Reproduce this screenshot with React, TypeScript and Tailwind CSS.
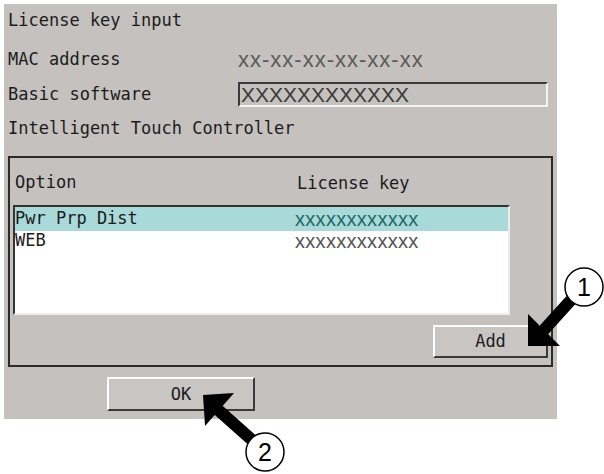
const mono = { fontFamily: '"DejaVu Sans Mono", "Liberation Mono", monospace' };

function Label({ children }: { children: React.ReactNode }) {
  return <span className="text-[17px] leading-none text-[#1c1c1c]">{children}</span>;
}

export default function App() {
  const options = [
    { name: 'Pwr Prp Dist', key: 'xxxxxxxxxxxx', selected: true },
    { name: 'WEB', key: 'xxxxxxxxxxxx', selected: false },
  ];

  return (
    <div className="relative w-[604px] h-[474px] bg-white overflow-hidden" style={mono}>
      {/* Dialog */}
      <div className="ml-[4px] mt-[4px] w-[553px] h-[415px] bg-[#c4c1be] flex flex-col pl-[4px]">
        <div className="h-[32px] flex items-center">
          <Label>License key input</Label>
        </div>
        <div className="mt-[6px] h-[36px] flex items-center">
          <div className="w-[230px]">
            <Label>MAC address</Label>
          </div>
          <span
            className="text-[22px] leading-none text-[#5a5a5a] tracking-[1px]"
            style={{ fontFamily: '"Liberation Sans", Arial, sans-serif' }}
          >
            xx-xx-xx-xx-xx-xx
          </span>
        </div>
        <div className="mt-[4px] h-[25px] flex items-center">
          <div className="w-[230px]">
            <Label>Basic software</Label>
          </div>
          <div className="w-[310px] h-[25px] border-t-2 border-l-2 border-b-2 border-r-2 border-t-[#3a3a3a] border-l-[#3a3a3a] border-b-[#f4f4f4] border-r-[#f4f4f4] flex items-center pl-[1px]">
            <span
              className="text-[21px] leading-none text-[#3a3a3a]"
              style={{ fontFamily: '"Liberation Sans", Arial, sans-serif' }}
            >
              XXXXXXXXXXXX
            </span>
          </div>
        </div>
        <div className="mt-[9px] h-[24px] flex items-center">
          <Label>Intelligent Touch Controller</Label>
        </div>

        {/* Option group */}
        <div className="mt-[16px] w-[545px] border-2 border-[#2b2b2b] flex flex-col pt-[13px] pb-[7px]">
          <div className="h-[24px] flex items-center pl-[5px]">
            <div className="w-[282px]">
              <Label>Option</Label>
            </div>
            <Label>License key</Label>
          </div>
          <div className="mt-[10px] ml-[3px] w-[497px] h-[110px] bg-white border-2 border-t-[#333] border-l-[#333] border-b-[#ececec] border-r-[#ececec] flex flex-col">
            {options.map((o, i) => (
              <div
                key={o.name}
                className={`flex items-center ${i === 0 ? 'h-[24px]' : 'h-[20px]'} ${o.selected ? 'bg-[#a9d9d9]' : ''}`}
              >
                <div className="w-[280px]">
                  <span className="text-[17px] leading-none text-[#1c1c1c]">{o.name}</span>
                </div>
                <span
                  className={`text-[20px] leading-none tracking-[0.3px] ${o.selected ? 'text-[#1d6a66]' : 'text-[#555]'}`}
                  style={{ fontFamily: '"Liberation Sans", Arial, sans-serif' }}
                >
                  {o.key}
                </span>
              </div>
            ))}
          </div>
          <div className="mt-[10px] flex justify-end pr-[3px]">
            <button className="w-[115px] h-[33px] bg-[#c8c5c2] border-2 border-t-white border-l-white border-b-[#3a3a3a] border-r-[#3a3a3a] flex items-center justify-center">
              <span className="text-[17px] leading-none text-[#1c1c1c]">Add</span>
            </button>
          </div>
        </div>

        <div className="mt-[10px] ml-[99px]">
          <button className="w-[148px] h-[34px] bg-[#c8c5c2] border-2 border-t-white border-l-white border-b-[#3a3a3a] border-r-[#3a3a3a] flex items-center justify-center">
            <span className="text-[17px] leading-none text-[#1c1c1c]">OK</span>
          </button>
        </div>
      </div>

      {/* Callout arrows */}
      <svg className="absolute inset-0 pointer-events-none" width="604" height="474" viewBox="0 0 604 474">
        <line x1="542" y1="332" x2="571" y2="300" stroke="black" strokeWidth="12" />
        <polygon points="528,346 528,314 560,346" fill="black" />
        <circle cx="584" cy="287" r="19" fill="white" stroke="black" strokeWidth="1.5" />
        <text x="584" y="296" textAnchor="middle" fontSize="25" fontFamily="Liberation Sans, Arial, sans-serif" fill="black">1</text>

        <line x1="216" y1="408" x2="252" y2="440" stroke="black" strokeWidth="12" />
        <polygon points="203,395 234,393 205,426" fill="black" />
        <circle cx="265" cy="452" r="19" fill="white" stroke="black" strokeWidth="1.5" />
        <text x="265" y="461" textAnchor="middle" fontSize="25" fontFamily="Liberation Sans, Arial, sans-serif" fill="black">2</text>
      </svg>
    </div>
  );
}
